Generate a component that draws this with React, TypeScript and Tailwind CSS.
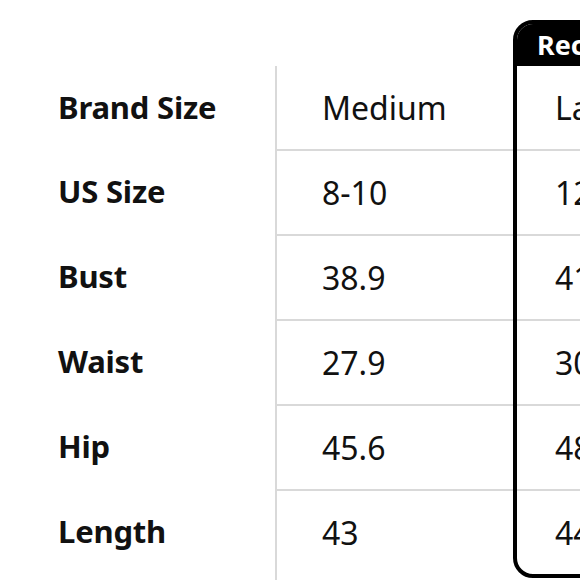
const ROWS = [
  { label: 'Brand Size', a: 'Medium', b: 'Large' },
  { label: 'US Size', a: '8-10', b: '12-14' },
  { label: 'Bust', a: '38.9', b: '41.6' },
  { label: 'Waist', a: '27.9', b: '30.6' },
  { label: 'Hip', a: '45.6', b: '48.3' },
  { label: 'Length', a: '43', b: '44' },
]

export default function App() {
  return (
    <div
      className="w-[580px] h-[580px] overflow-hidden bg-white text-[#111] flex"
      style={{ fontFamily: '"Noto Sans", "Open Sans", sans-serif' }}
    >
      {/* Labels */}
      <div className="w-[275px] shrink-0 pl-[58px] pt-[66px]">
        {ROWS.map((r, i) => (
          <div
            key={r.label}
            className={`${i === 0 ? 'h-[83px]' : 'h-[85px]'} flex items-center text-[31px] font-bold tracking-[-0.2px]`}
          >
            {r.label}
          </div>
        ))}
      </div>

      {/* Values */}
      <div className="w-[238px] shrink-0 mt-[66px] border-l-2 border-[#d9d9d9]">
        {ROWS.map((r, i) => (
          <div
            key={r.label}
            className={`${i === 0 ? 'h-[83px]' : 'h-[85px] border-t-2 border-[#d9d9d9]'} flex items-center pl-[45px] text-[32px]`}
          >
            {r.a}
          </div>
        ))}
      </div>

      {/* Recommended */}
      <div className="w-[320px] shrink-0 mt-[20px] self-start border-4 border-black rounded-[20px] overflow-hidden">
        <div className="h-[42px] bg-black text-white text-[27px] font-bold flex items-center pl-[20px] whitespace-nowrap">
          Recommended
        </div>
        {ROWS.map((r, i) => (
          <div
            key={r.label}
            className={`${i === 0 ? 'h-[83px]' : 'h-[85px] border-t-2 border-[#d9d9d9]'} flex items-center pl-[38px] text-[32px]`}
          >
            {r.b}
          </div>
        ))}
      </div>
    </div>
  )
}
